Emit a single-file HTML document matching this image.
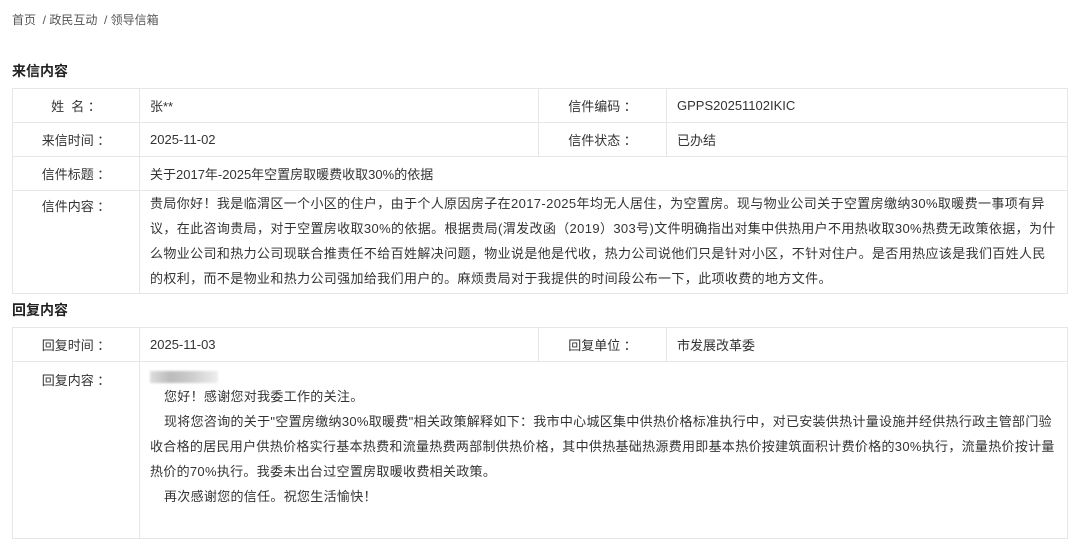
<!DOCTYPE html>
<html><head><meta charset="utf-8"><style>
*{margin:0;padding:0;box-sizing:border-box}
body{width:1080px;height:550px;background:#fff;font-family:"Liberation Sans","Noto Sans CJK SC",sans-serif;color:#333;font-size:13px;overflow:hidden;position:relative}
.bc{position:absolute;left:12px;top:11px;font-size:12px;color:#555}
.h{position:absolute;left:12px;font-size:14px;font-weight:bold;color:#222}
table{position:absolute;left:12px;width:1055px;border-collapse:collapse;table-layout:fixed}
td{border:1px solid #e6e6e6;height:34px;padding:0 10px;vertical-align:middle}
td.l{text-align:center;color:#333}
.txt{line-height:25px;padding:0 10px 2px 10px;vertical-align:top;letter-spacing:0.37px}
.lt{vertical-align:top;padding-top:6px}
.blur{width:68px;height:12px;background:linear-gradient(90deg,#ddd,#bbb 30%,#ccc 60%,#eee);margin-top:4px;filter:blur(1px)}
</style></head><body>
<div class="bc">首页 &nbsp;/ 政民互动 &nbsp;/ 领导信箱</div>
<div class="h" style="top:61px">来信内容</div>
<table style="top:88px">
<colgroup><col style="width:127px"><col style="width:399px"><col style="width:128px"><col style="width:401px"></colgroup>
<tr><td class="l">姓 &nbsp;名 ：</td><td>张**</td><td class="l">信件编码 ：</td><td>GPPS20251102IKIC</td></tr>
<tr><td class="l">来信时间 ：</td><td>2025-11-02</td><td class="l">信件状态 ：</td><td>已办结</td></tr>
<tr><td class="l">信件标题 ：</td><td colspan="3">关于2017年-2025年空置房取暖费收取30%的依据</td></tr>
<tr><td class="l lt" style="height:100px;padding-top:5px">信件内容 ：</td><td colspan="3" class="txt">贵局你好！我是临渭区一个小区的住户，由于个人原因房子在2017-2025年均无人居住，为空置房。现与物业公司关于空置房缴纳30%取暖费一事项有异议，在此咨询贵局，对于空置房收取30%的依据。根据贵局(渭发改函（2019）303号)文件明确指出对集中供热用户不用热收取30%热费无政策依据，为什么物业公司和热力公司现联合推责任不给百姓解决问题，物业说是他是代收，热力公司说他们只是针对小区，不针对住户。是否用热应该是我们百姓人民的权利，而不是物业和热力公司强加给我们用户的。麻烦贵局对于我提供的时间段公布一下，此项收费的地方文件。</td></tr>
</table>
<div class="h" style="top:300px">回复内容</div>
<table style="top:327px">
<colgroup><col style="width:127px"><col style="width:399px"><col style="width:128px"><col style="width:401px"></colgroup>
<tr><td class="l">回复时间 ：</td><td>2025-11-03</td><td class="l">回复单位 ：</td><td>市发展改革委</td></tr>
<tr><td class="l lt" style="height:177px;padding-top:8px">回复内容 ：</td><td colspan="3" class="txt" style="padding-top:5px;letter-spacing:0.3px"><div class="blur"></div>
<div style="text-indent:14px;margin-top:1px">您好！感谢您对我委工作的关注。</div>
<div style="text-indent:14px">现将您咨询的关于"空置房缴纳30%取暖费"相关政策解释如下：我市中心城区集中供热价格标准执行中，对已安装供热计量设施并经供热行政主管部门验收合格的居民用户供热价格实行基本热费和流量热费两部制供热价格，其中供热基础热源费用即基本热价按建筑面积计费价格的30%执行，流量热价按计量热价的70%执行。我委未出台过空置房取暖收费相关政策。</div>
<div style="text-indent:14px">再次感谢您的信任。祝您生活愉快！</div></td></tr>
</table>
</body></html>
